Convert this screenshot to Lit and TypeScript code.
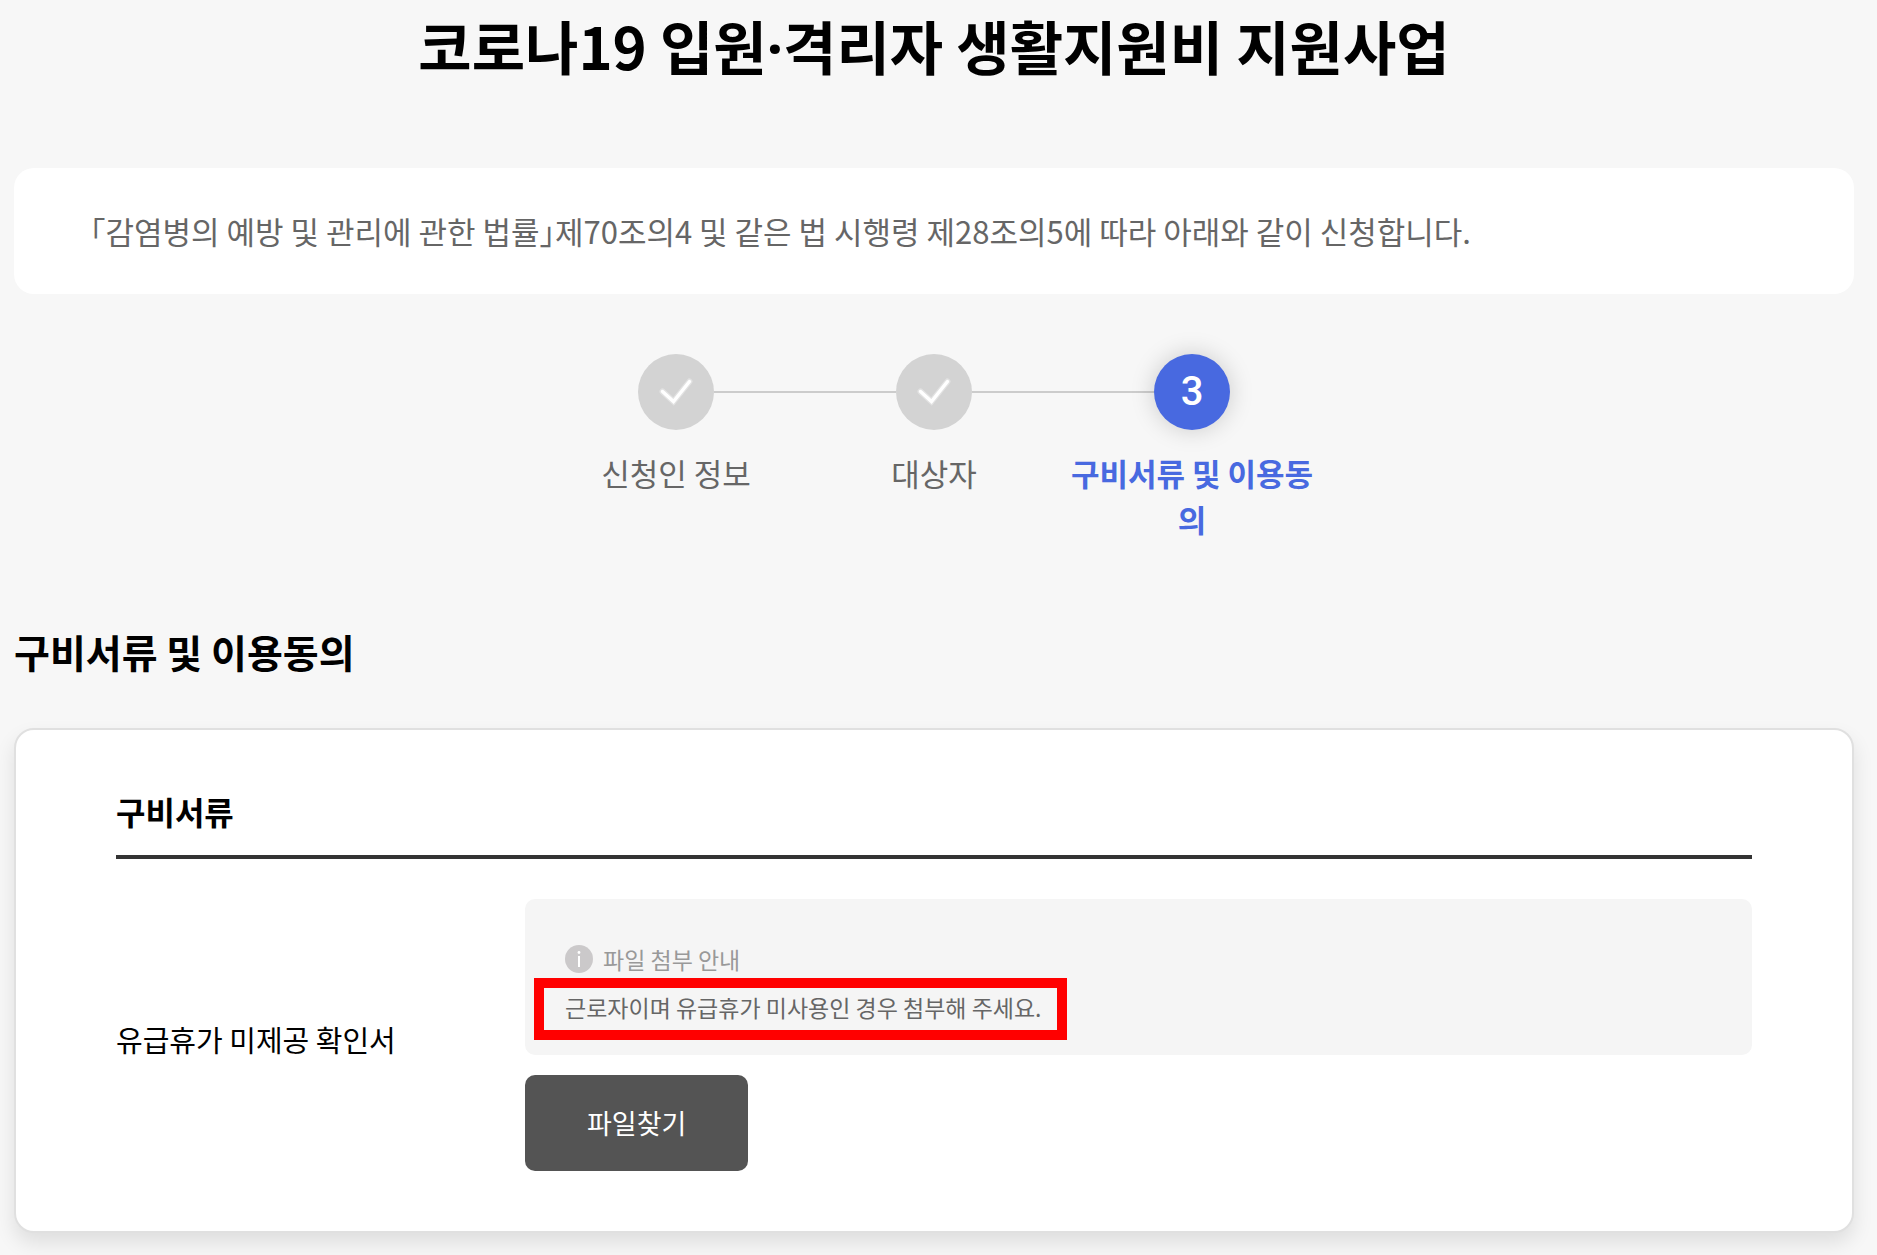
import { LitElement, html, css, svg } from "lit";
import { customElement, property, state } from "lit/decorators.js";
import { classMap } from "lit/directives/class-map.js";

interface Step {
  label: string;
}

@customElement("step-progress")
class StepProgress extends LitElement {
  @property({ attribute: false }) steps: Step[] = [];
  @property({ type: Number }) current = 1;

  static styles = css`
    :host {
      display: block;
    }
    .steps {
      display: flex;
      justify-content: center;
      margin: 0;
      padding: 0;
      list-style: none;
    }
    .step {
      flex: 0 1 258px;
      text-align: center;
      color: #666;
      font-size: 31px;
      line-height: 46px;
    }
    .track {
      display: grid;
      grid-template-columns: 1fr auto 1fr;
      align-items: center;
      margin-bottom: 20px;
    }
    .line {
      height: 2px;
      background: #ccc;
    }
    .line.hidden {
      visibility: hidden;
    }
    .marker {
      display: grid;
      place-items: center;
      width: 76px;
      height: 76px;
      border-radius: 50%;
      background: #d3d3d3;
      color: #fff;
      font-family: Roboto, "Noto Sans CJK KR", sans-serif;
      font-size: 40px;
      font-weight: 500;
    }
    .check {
      width: 76px;
      height: 76px;
    }
    .active {
      color: #4869e0;
      font-weight: 700;
    }
    .active .marker {
      background: #4869e0;
      box-shadow: 0 0 24px rgba(0, 0, 0, 0.18);
    }
  `;

  private renderCheck() {
    return html`<svg class="check" viewBox="0 0 76 76" fill="none" aria-hidden="true">
      ${svg`<path d="M24.5 37.5 35.5 47.5 51.5 27.5" stroke="#fff" stroke-opacity=".35" stroke-width="6" stroke-linecap="round" />
      <path d="M24.5 37.5 35.5 47.5 51.5 27.5" stroke="#fff" stroke-width="3.4" stroke-linecap="round" />`}
    </svg>`;
  }

  render() {
    return html`<ol class="steps">
      ${this.steps.map((step, i) => {
        const number = i + 1;
        const active = number === this.current;
        return html`<li
          class=${classMap({ step: true, active })}
          aria-current=${active ? "step" : "false"}
        >
          <div class="track">
            <span class=${classMap({ line: true, hidden: i === 0 })}></span>
            <span class="marker">${number < this.current ? this.renderCheck() : number}</span>
            <span class=${classMap({ line: true, hidden: number === this.steps.length })}></span>
          </div>
          <div>${step.label}</div>
        </li>`;
      })}
    </ol>`;
  }
}

@customElement("file-attachment")
class FileAttachment extends LitElement {
  @property() label = "";
  @property() guide = "";

  static styles = css`
    :host {
      display: block;
    }
    .row {
      display: grid;
      grid-template-columns: 1fr 3fr;
      align-items: center;
    }
    .label {
      padding-top: 8px;
      font-size: 29px;
      line-height: 46px;
    }
    .field {
      display: flex;
      flex-direction: column;
      align-items: flex-start;
      gap: 20px;
    }
    .guide {
      box-sizing: border-box;
      width: 100%;
      padding: 36px 40px 24px;
      border-radius: 10px;
      background: #f5f5f5;
      color: #666;
      font-size: 23px;
      line-height: 48px;
    }
    .guide-title,
    .guide-text {
      margin: 0;
    }
    .guide-title {
      display: flex;
      align-items: center;
      gap: 10px;
      color: #999;
    }
    .info {
      width: 28px;
      height: 28px;
    }
    .marked {
      position: relative;
      display: inline-block;
    }
    .marked::after {
      content: "";
      position: absolute;
      inset: -5px -25px -9px -31px;
      border: 10px solid #f00;
      pointer-events: none;
    }
    .browse {
      padding: 24px 62px;
      border: 0;
      border-radius: 10px;
      background: #545454;
      color: #fff;
      font-family: inherit;
      font-size: 27px;
      line-height: 48px;
      cursor: pointer;
    }
  `;

  render() {
    return html`<div class="row" role="group" aria-labelledby="label">
      <div class="label" id="label">${this.label}</div>
      <div class="field">
        <div class="guide" id="guide">
          <p class="guide-title">
            <svg class="info" viewBox="0 0 28 28" aria-hidden="true">
              <circle cx="14" cy="14" r="14" fill="#cbc9ca" />
              <rect x="13" y="11" width="2" height="11" fill="#fff" />
              <circle cx="14" cy="7.5" r="1.4" fill="#fff" />
            </svg>
            <span>파일 첨부 안내</span>
          </p>
          <p class="guide-text"><span class="marked">${this.guide}</span></p>
        </div>
        <button class="browse" type="button" aria-describedby="label guide">파일찾기</button>
      </div>
    </div>`;
  }
}

@customElement("app-root")
class AppRoot extends LitElement {
  @state() private steps: Step[] = [
    { label: "신청인 정보" },
    { label: "대상자" },
    { label: "구비서류 및 이용동의" },
  ];

  static styles = css`
    :host {
      display: block;
      box-sizing: border-box;
      min-height: 100vh;
      padding: 5px 23px 22px 14px;
      background: #f7f7f7;
      color: #000;
      font-family: "Noto Sans CJK KR", "Noto Sans", sans-serif;
    }
    .title {
      margin: 0 0 83px;
      text-align: center;
      font-size: 58px;
      line-height: 80px;
      font-weight: 700;
    }
    .dot {
      font-family: "Noto Sans", sans-serif;
      line-height: 1;
    }
    .notice {
      margin: 0 0 60px;
      padding: 40px 76px;
      border-radius: 20px;
      background: #fff;
      color: #666;
      font-size: 31px;
      line-height: 46px;
      font-feature-settings: "halt";
    }
    .section-title {
      margin: 80px 0 48px;
      font-size: 39px;
      line-height: 58px;
      font-weight: 700;
    }
    .card {
      padding: 57px 100px 60px;
      border: 2px solid #e0e0e0;
      border-radius: 20px;
      background: #fff;
      box-shadow: 0 10px 20px rgba(0, 0, 0, 0.1);
    }
    .card-title {
      margin: 0 0 40px;
      padding-bottom: 20px;
      border-bottom: 4px solid #333;
      font-size: 32px;
      line-height: 48px;
      font-weight: 700;
    }
  `;

  render() {
    return html`<main>
      <h1 class="title">코로나19 입원<span class="dot">·</span>격리자 생활지원비 지원사업</h1>
      <p class="notice">「감염병의 예방 및 관리에 관한 법률」제70조의4 및 같은 법 시행령 제28조의5에 따라 아래와 같이 신청합니다.</p>
      <step-progress .steps=${this.steps} .current=${3}></step-progress>
      <h2 class="section-title">구비서류 및 이용동의</h2>
      <section class="card">
        <h3 class="card-title">구비서류</h3>
        <file-attachment
          label="유급휴가 미제공 확인서"
          guide="근로자이며 유급휴가 미사용인 경우 첨부해 주세요."
        ></file-attachment>
      </section>
    </main>`;
  }
}
